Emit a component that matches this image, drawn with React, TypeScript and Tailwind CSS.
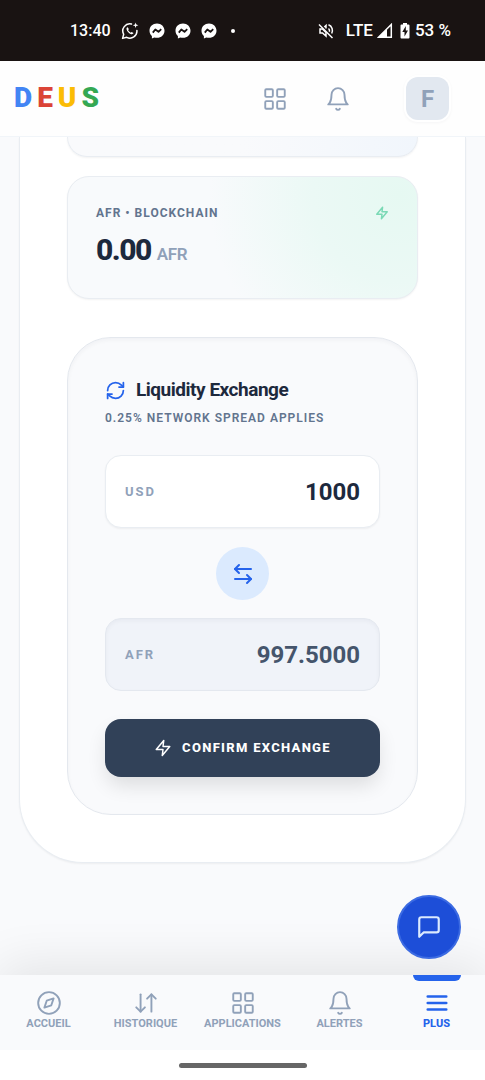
import { useState } from 'react';
import type { ReactNode } from 'react';
import { ArrowDownUp, ArrowLeftRight, LayoutGrid, RefreshCw } from 'lucide-react';

type IconProps = { className?: string; children?: ReactNode };

function Icon({ className = '', children }: IconProps) {
  return (
    <svg
      viewBox="0 0 24 24"
      fill="none"
      stroke="currentColor"
      strokeLinecap="round"
      strokeLinejoin="round"
      aria-hidden="true"
      className={className}
    >
      {children}
    </svg>
  );
}

function BellIcon({ className }: IconProps) {
  return (
    <Icon className={className}>
      <path d="M6 8a6 6 0 0 1 12 0c0 7 3 9 3 9H3s3-2 3-9" />
      <path d="M10.3 21a1.94 1.94 0 0 0 3.4 0" />
    </Icon>
  );
}

function ZapIcon({ className }: IconProps) {
  return (
    <Icon className={className}>
      <polygon points="13 2 3 14 12 14 11 22 21 10 12 10 13 2" />
    </Icon>
  );
}

function CompassIcon({ className }: IconProps) {
  return (
    <Icon className={className}>
      <circle cx="12" cy="12" r="10" />
      <polygon points="16.24 7.76 14.12 14.12 7.76 16.24 9.88 9.88 16.24 7.76" />
    </Icon>
  );
}

function MenuIcon({ className }: IconProps) {
  return (
    <Icon className={className}>
      <path d="M3.5 6h17M3.5 12h17M3.5 18h17" />
    </Icon>
  );
}

function ChatIcon({ className }: IconProps) {
  return (
    <Icon className={className}>
      <path d="M21 15a2 2 0 0 1-2 2H7l-4 4V5a2 2 0 0 1 2-2h14a2 2 0 0 1 2 2z" />
    </Icon>
  );
}

function WhatsAppIcon() {
  return (
    <svg viewBox="0 0 18 18" fill="none" className="size-[18px]" aria-hidden="true">
      <path
        d="M10.5 2.1A7 7 0 0 0 2.7 12.3L1.6 16.4l4.1-1.1A7 7 0 0 0 15.9 8.4"
        stroke="white"
        strokeWidth="1.5"
        strokeLinecap="round"
        strokeLinejoin="round"
      />
      <path
        d="M6.7 5.3c-.9.3-1.4 1.2-1.1 2.3.5 2.1 2.4 4 4.6 4.6 1.1.3 2-.2 2.3-1.1l-1.9-1.2-.9.8C8.6 10.2 7.5 9.1 7.1 8.1l.8-.9z"
        fill="white"
      />
      <path d="M14.6.4l.7 2.1 2.1.7-2.1.7-.7 2.1-.7-2.1-2.1-.7 2.1-.7z" fill="white" />
    </svg>
  );
}

function MessengerIcon() {
  return (
    <svg viewBox="0 0 16 16" className="size-4" aria-hidden="true">
      <path
        d="M8 .5C3.7.5.5 3.6.5 7.7c0 2.2.9 4 2.4 5.3v2.5l2.4-1.1c.9.2 1.7.4 2.7.4 4.3 0 7.5-3.1 7.5-7.1S12.3.5 8 .5z"
        fill="white"
      />
      <path
        d="M3.8 9.6l2.5-3.1 3.2 2.3 2.7-2.7"
        fill="none"
        stroke="#191312"
        strokeWidth="1.8"
        strokeLinejoin="round"
      />
    </svg>
  );
}

function StatusBar() {
  return (
    <div className="flex h-[61px] shrink-0 items-center justify-between bg-[#191312] pr-[34px] pl-[70px] font-medium text-white">
      <div className="flex items-center gap-2.5">
        <span className="w-[41px] whitespace-nowrap">13:40</span>
        <WhatsAppIcon />
        <MessengerIcon />
        <MessengerIcon />
        <MessengerIcon />
        <span className="ml-1 size-1 rounded-full bg-white" />
      </div>
      <div className="flex items-center gap-1">
        <svg viewBox="0 0 16 16" fill="none" stroke="white" strokeWidth="1.5" className="mr-2 size-4" aria-hidden="true">
          <path d="M1 1.5l13.5 13.5" />
          <path d="M4.5 6H2v4h2.500L8 13v-3.5zM6.3 4L8 2.5v3" />
          <path d="M10.5 5.5c.9.8 1.2 2 .9 3.2M10.5 1.8c3.7 1.4 4.8 5.3 3.2 8.7" />
        </svg>
        <span className="text-[17px]">LTE</span>
        <svg viewBox="0 0 16 16" className="size-4" aria-hidden="true">
          <path d="M1.5 14.3L14.3 1.5v12.8z" fill="none" stroke="white" strokeWidth="1.5" />
          <path d="M1 15L10 6v9z" fill="white" />
        </svg>
        <svg viewBox="0 0 12 16" className="ml-0.5 h-4 w-3" aria-hidden="true">
          <path d="M4 0h4v1.5h1.5q1 0 1 1v12q0 1-1 1h-7q-1 0-1-1v-12q0-1 1-1H4z" fill="white" />
          <path d="M6.8 3L3.3 9h2.2v4.5L9 7.5H6.8z" fill="#191312" />
        </svg>
        <span className="text-[17px] whitespace-nowrap">53 %</span>
      </div>
    </div>
  );
}

function Header() {
  return (
    <header className="flex h-[76px] shrink-0 items-center border-b border-slate-100 bg-[#fefefe] pr-9 pl-3.5">
      <h1 className="flex gap-[5px] pb-0.5 text-[28px] font-black">
        <span className="text-[#4285f4]">D</span>
        <span className="text-[#db4437]">E</span>
        <span className="text-[#fbbc05]">U</span>
        <span className="text-[#34a853]">S</span>
      </h1>
      <div className="ml-auto flex items-center text-slate-400">
        <button type="button" aria-label="Applications" className="mr-[37px]">
          <LayoutGrid className="size-[26px] stroke-[1.75]" />
        </button>
        <button type="button" aria-label="Alertes" className="mr-[55px]">
          <BellIcon className="size-[26px] stroke-[1.75]" />
        </button>
        <button
          type="button"
          aria-label="Profil"
          className="size-[43px] rounded-xl bg-slate-200 text-2xl font-bold shadow-[0_0_0_2px_white,0_1px_3px_2px_rgba(15,23,42,0.04)]"
        >
          F
        </button>
      </div>
    </header>
  );
}

function BalanceCard() {
  return (
    <section className="mt-[19px] rounded-[22px] border border-[#e9edf2] bg-[#f8fafc] bg-[radial-gradient(circle_at_95%_15%,#e6f9f2_0%,#ebf9f5_25%,#f8fafc_55%)] px-7 pt-7 pb-[26px] shadow-xs">
      <div className="flex items-center justify-between">
        <h2 className="text-xs leading-4 font-bold tracking-[1px] text-slate-500">AFR • BLOCKCHAIN</h2>
        <ZapIcon className="size-3.5 stroke-[2.5] text-[#7ad9b5]" />
      </div>
      <p className="mt-[11px] flex items-baseline gap-1.5 text-[30px] leading-9 font-extrabold tracking-tighter text-slate-800">
        0.00 <span className="text-[17px] font-semibold tracking-tight text-slate-400">AFR</span>
      </p>
    </section>
  );
}

function LiquidityExchange() {
  const [amount, setAmount] = useState('1000');
  const received = (Number(amount) * 0.9975).toFixed(4);

  return (
    <section className="mt-[38px] rounded-[44px] border border-[#e4e8ee] bg-[#f9fafc] px-[37px] pt-[38px] pb-[37px] shadow-[inset_0_2px_4px_rgba(15,23,42,0.04)]">
      <h2 className="flex items-center gap-2.5 text-[19px] leading-7 font-bold tracking-tight text-slate-800">
        <RefreshCw className="size-[21px] stroke-2 text-[#2563eb]" />
        Liquidity Exchange
      </h2>
      <p className="mt-1.5 text-xs leading-4 font-semibold tracking-[1px] text-slate-500">
        0.25% NETWORK SPREAD APPLIES
      </p>

      <div className="mt-[29px] flex h-[73px] items-center rounded-2xl border border-[#e9edf2] bg-white px-[19px] shadow-xs">
        <label htmlFor="usd" className="text-[13px] font-bold tracking-[2px] text-slate-400">
          USD
        </label>
        <input
          id="usd"
          inputMode="decimal"
          value={amount}
          onChange={(e) => setAmount(e.target.value)}
          className="w-full min-w-0 bg-transparent text-right text-2xl font-bold text-slate-800 outline-none"
        />
      </div>

      <div className="flex justify-center pt-[19px] pb-[18px]">
        <button
          type="button"
          aria-label="Swap currencies"
          className="flex size-[53px] items-center justify-center rounded-full bg-blue-100 text-[#2563eb]"
        >
          <ArrowLeftRight className="size-6 stroke-2" />
        </button>
      </div>

      <div className="flex h-[73px] items-center rounded-2xl border border-[#e4e8ef] bg-[#f0f3f9] px-[19px] shadow-[inset_0_2px_4px_rgba(15,23,42,0.04)]">
        <label htmlFor="afr" className="text-[13px] font-bold tracking-[2px] text-slate-400">
          AFR
        </label>
        <input
          id="afr"
          readOnly
          value={received}
          className="w-full min-w-0 bg-transparent text-right text-2xl font-bold text-slate-600 outline-none"
        />
      </div>

      <button
        type="button"
        className="mt-7 flex h-[58px] w-full items-center justify-center gap-2.5 rounded-2xl bg-slate-700 text-[13px] font-extrabold tracking-widest text-white shadow-[0_10px_20px_-2px_rgba(0,0,0,0.12)]"
      >
        <ZapIcon className="size-[18px] stroke-2" />
        CONFIRM EXCHANGE
      </button>
    </section>
  );
}

const navItems = [
  { label: 'ACCUEIL', icon: CompassIcon },
  { label: 'HISTORIQUE', icon: ArrowDownUp },
  { label: 'APPLICATIONS', icon: LayoutGrid },
  { label: 'ALERTES', icon: BellIcon },
  { label: 'PLUS', icon: MenuIcon, active: true },
];

function BottomNav() {
  return (
    <nav className="relative grid h-[75px] shrink-0 grid-cols-5 bg-[#f9fafc] shadow-[0_-10px_50px_rgba(0,0,0,0.09)]">
      {navItems.map(({ label, icon: NavIcon, active }) => (
        <a
          key={label}
          href="#"
          className={`relative flex flex-col items-center pt-[15px] text-[11px] leading-4 ${
            active ? 'font-extrabold text-[#2563eb]' : 'font-bold text-slate-400'
          }`}
        >
          {active && <span className="absolute top-0 h-1.5 w-12 rounded-b-md bg-[#2563eb]" />}
          <NavIcon className={active ? 'size-[26px] stroke-[2.5]' : 'size-[26px] stroke-[1.75]'} />
          {label}
        </a>
      ))}

      {/* Floating chat button */}
      <button
        type="button"
        aria-label="Chat"
        className="absolute right-6 bottom-[91px] flex size-16 items-center justify-center rounded-full border-2 border-[#3c6be2] bg-[#1d4ed8] text-blue-100"
      >
        <ChatIcon className="size-[26px] stroke-2" />
      </button>
    </nav>
  );
}

export default function App() {
  return (
    <div className="flex h-screen flex-col bg-white font-[Roboto,sans-serif]">
      <StatusBar />
      <Header />

      <main className="min-h-0 flex-1 overflow-hidden bg-[#f9fafc] px-[19px]">
        <div className="rounded-b-[64px] border border-t-0 border-[#e9edf2] bg-white px-[47px] pb-[47px] shadow-xs">
          {/* Tail of the previous balance card, scrolled under the header */}
          <div className="h-5 rounded-b-[22px] border border-t-0 border-[#e9edf2] bg-linear-to-r from-[#f9fafc] from-50% to-[#f1f6fc] shadow-xs" />
          <BalanceCard />
          <LiquidityExchange />
        </div>
      </main>

      <BottomNav />

      {/* System gesture bar */}
      <div className="relative flex h-[30px] shrink-0 items-center justify-center bg-white">
        <span className="h-[5px] w-32 rounded-full bg-[#666666]" />
      </div>
    </div>
  );
}
